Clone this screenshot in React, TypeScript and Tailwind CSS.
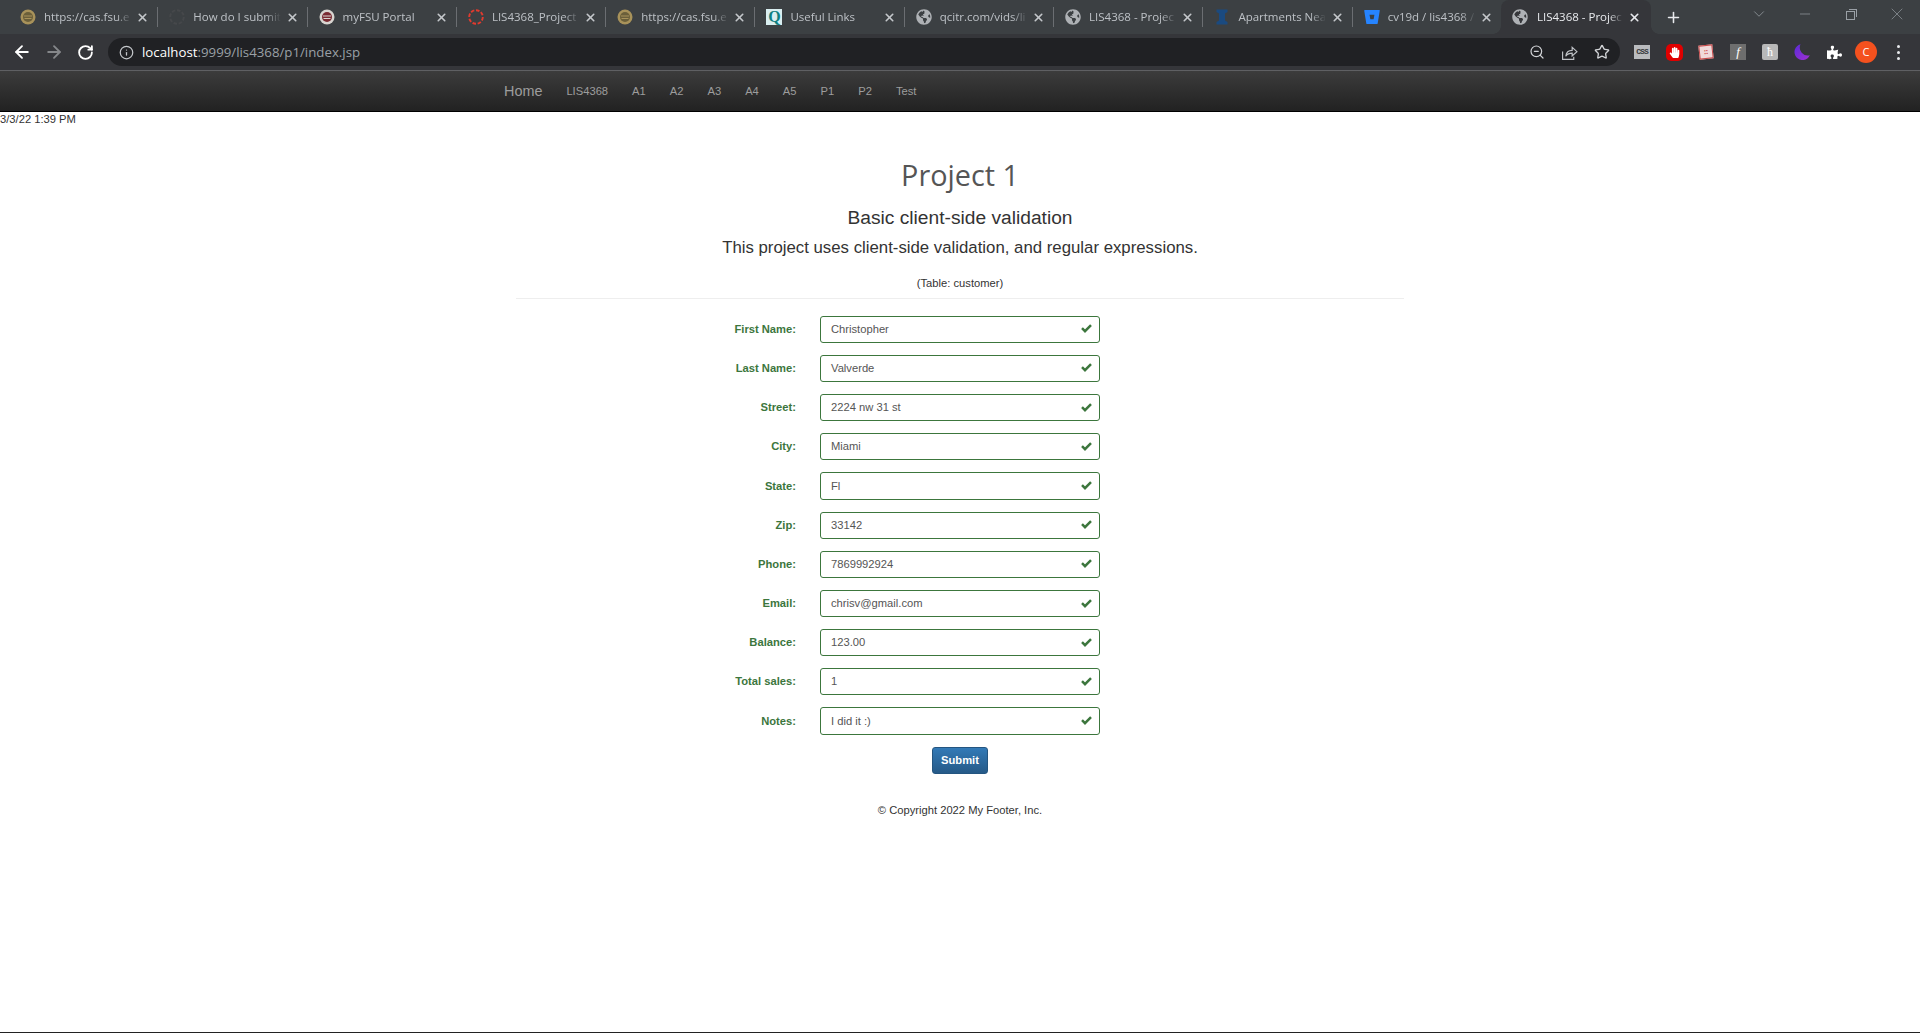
import React from "react";
import { ArrowLeft, ArrowRight, RotateCw, Info, ZoomOut, Star, X, Plus, ChevronDown, Minus } from "lucide-react";
import { FaGlobeAmericas, FaBitbucket, FaPuzzlePiece, FaHandPaper } from "react-icons/fa";

const Seal = ({ outer, inner }: { outer: string; inner: string }) => (
  <svg viewBox="0 0 16 16" className="h-4 w-4">
    <circle cx="8" cy="8" r="7.5" fill={outer} />
    <circle cx="8" cy="8" r="5" fill={inner} />
    <path d="M4 7h8M4.5 9.5h7" stroke={outer} strokeWidth="1" />
  </svg>
);
const Dashed = ({ color }: { color: string }) => (
  <svg viewBox="0 0 16 16" className="h-4 w-4">
    <circle cx="8" cy="8" r="6.8" fill="none" stroke={color} strokeWidth="1.9" strokeDasharray="3.6 1.7" />
  </svg>
);
const Globe = () => <FaGlobeAmericas className="h-4 w-4 text-[#aeb1b5]" />;
const Spool = () => (
  <svg viewBox="0 0 16 16" className="h-4 w-4">
    <path d="M2.5 0.5h11v2.5l-2.5 1.5v7l2.5 1.5v2.5h-11V13l2.5-1.5v-7L2.5 3z" fill="#1a4a80" />
  </svg>
);
const QIcon = () => (
  <div className="flex h-4 w-4 items-center justify-center bg-[#d9eef0] font-['Liberation_Serif',serif] text-[16px] leading-4 font-bold text-[#0f7f80]">
    Q
  </div>
);
const ShareOut = () => (
  <svg viewBox="0 0 16 16" className="h-[17px] w-[17px]" fill="none" stroke="#bfc2c6" strokeWidth="1.1">
    <path d="M1.5 7v7.5h10.5V12" />
    <path d="M4.5 11.5C5 7.5 7.5 6 10.5 6V3.2L15 7.2l-4.5 4V8.6c-2.5 0-4.5.8-6 2.9z" />
  </svg>
);
const Check = () => (
  <svg viewBox="0 0 11 9" className="-mt-[1px] h-[9px] w-[11px]" fill="none" stroke="#3c763d" strokeWidth="2.5">
    <path d="M1 4.2l3 3L10 1.2" />
  </svg>
);

const tabs: { title: string; icon: React.ReactNode }[] = [
  { title: "https://cas.fsu.e", icon: <Seal outer="#a8925a" inner="#6b5f3a" /> },
  { title: "How do I submit", icon: <Dashed color="#46484b" /> },
  { title: "myFSU Portal", icon: <Seal outer="#d8d4d0" inner="#7a2a32" /> },
  { title: "LIS4368_Project", icon: <Dashed color="#e23a2e" /> },
  { title: "https://cas.fsu.e", icon: <Seal outer="#a8925a" inner="#6b5f3a" /> },
  { title: "Useful Links", icon: <QIcon /> },
  { title: "qcitr.com/vids/li", icon: <Globe /> },
  { title: "LIS4368 - Projec", icon: <Globe /> },
  { title: "Apartments Nea", icon: <Spool /> },
  { title: "cv19d / lis4368 /", icon: <FaBitbucket className="h-4 w-4 text-[#2684ff]" /> },
];

const fields: [string, string][] = [
  ["First Name:", "Christopher"],
  ["Last Name:", "Valverde"],
  ["Street:", "2224 nw 31 st"],
  ["City:", "Miami"],
  ["State:", "Fl"],
  ["Zip:", "33142"],
  ["Phone:", "7869992924"],
  ["Email:", "chrisv@gmail.com"],
  ["Balance:", "123.00"],
  ["Total sales:", "1"],
  ["Notes:", "I did it :)"],
];

const navItems = ["LIS4368", "A1", "A2", "A3", "A4", "A5", "P1", "P2", "Test"];

function Tab({ title, icon }: { title: string; icon: React.ReactNode }) {
  return (
    <div className="flex h-[34px] w-[149.3px] shrink-0 items-center justify-between">
      <div className="flex h-[20px] w-full items-center border-r border-[#6b6e72] pr-[8px] pl-[11px]">
        <div className="flex h-4 w-4 shrink-0 items-center justify-center">{icon}</div>
        <div className="ml-[8px] w-[89px] overflow-hidden text-[11.5px] whitespace-nowrap text-[#bdc1c6] [mask-image:linear-gradient(to_right,black_72px,transparent_88px)]">
          {title}
        </div>
        <X className="ml-auto h-[13px] w-[13px] shrink-0 text-[#c4c7cb]" strokeWidth={3} />
      </div>
    </div>
  );
}

function ExtCell({ children }: { children: React.ReactNode }) {
  return <div className="flex h-[24px] w-[32px] shrink-0 items-center justify-center">{children}</div>;
}

function ChromeBar() {
  return (
    <div className="font-['Open_Sans',sans-serif]">
      <div className="flex h-[34px] items-center bg-[#3c4043] pl-[9px]">
        {tabs.map((t, i) => (
          <Tab key={i} title={t.title} icon={t.icon} />
        ))}
        <div className="relative -ml-[1px] flex h-[34px] w-[150px] shrink-0 items-center rounded-t-lg bg-[#35363a] pr-[10px] pl-[11px]">
          <span className="absolute bottom-0 -left-2 h-2 w-2 bg-[radial-gradient(circle_at_0_0,transparent_7.5px,#35363a_8px)]" />
          <span className="absolute bottom-0 -right-2 h-2 w-2 bg-[radial-gradient(circle_at_100%_0,transparent_7.5px,#35363a_8px)]" />
          <Globe />
          <div className="ml-[9px] w-[88px] overflow-hidden text-[11.5px] whitespace-nowrap text-[#e8eaed] [mask-image:linear-gradient(to_right,black_72px,transparent_86px)]">
            LIS4368 - Projec
          </div>
          <X className="ml-auto h-[13px] w-[13px] text-[#e8eaed]" strokeWidth={3} />
        </div>
        <Plus className="ml-[14px] h-[17px] w-[17px] text-[#e8eaed]" strokeWidth={2.2} />
        <div className="ml-auto flex h-[34px] items-start text-[#9aa0a6]">
          <div className="flex h-[28px] w-[46px] items-center justify-center">
            <ChevronDown className="h-[18px] w-[18px]" strokeWidth={1} />
          </div>
          <div className="flex h-[28px] w-[46px] items-center justify-center">
            <Minus className="h-[16px] w-[16px]" strokeWidth={1} />
          </div>
          <div className="flex h-[28px] w-[46px] -translate-x-[1px] items-center justify-center">
            <div className="relative h-[9px] w-[9px] translate-y-[1px] border border-[#9aa0a6]">
              <span className="absolute -top-[3px] -right-[3px] h-[8px] w-[8px] border-t border-r border-[#9aa0a6]" />
            </div>
          </div>
          <div className="flex h-[28px] w-[46px] items-center justify-center">
            <X className="h-[20px] w-[20px]" strokeWidth={0.8} />
          </div>
        </div>
      </div>

      <div className="flex h-[36px] items-center bg-[#35363a]">
        <div className="flex w-[108px] shrink-0 items-center pl-[12px] text-white">
          <ArrowLeft className="h-[20px] w-[20px]" strokeWidth={2.2} />
          <ArrowRight className="ml-[12px] h-[20px] w-[20px] text-[#85878a]" strokeWidth={2.2} />
          <RotateCw className="ml-[13px] h-[17px] w-[17px]" strokeWidth={2.6} />
        </div>
        <div className="flex h-[28px] w-[1512px] shrink-0 items-center rounded-full bg-[#202124] pr-[10px] pl-[11px]">
          <Info className="h-[15px] w-[15px] text-[#c4c7cb]" strokeWidth={2} />
          <div className="mt-[1px] ml-[8px] text-[13.25px] leading-none whitespace-nowrap text-[#9aa0a6]">
            <span className="text-white">localhost</span>:9999/lis4368/p1/index.jsp
          </div>
          <div className="ml-auto flex items-center gap-[16px] text-[#d2d4d7]">
            <ZoomOut className="h-[16px] w-[16px]" strokeWidth={1.8} />
            <ShareOut />
            <Star className="h-[16px] w-[16px]" strokeWidth={2} />
          </div>
        </div>
        <div className="flex items-center pl-[6px]">
          <ExtCell>
            <div className="flex h-[14px] w-[16px] items-center justify-center bg-[#b9bbbe] font-['Liberation_Mono',monospace] text-[8px] font-bold tracking-[-1px] text-[#35363a]">
              CSS
            </div>
          </ExtCell>
          <ExtCell>
            <div className="flex h-[17px] w-[17px] items-center justify-center rounded-[5px] bg-[#e00000]">
              <FaHandPaper className="h-[11px] w-[11px] text-white" />
            </div>
          </ExtCell>
          <ExtCell>
            <div className="flex h-[14px] w-[14px] -rotate-6 items-center justify-center border border-[#c94a4a] bg-[#f0dada] text-[7px] font-bold text-[#c93030]">
              ::
            </div>
          </ExtCell>
          <ExtCell>
            <div className="flex h-[16px] w-[16px] items-center justify-center bg-[#6e6e6e] font-['Liberation_Serif',serif] text-[13px] text-white italic">
              f
            </div>
          </ExtCell>
          <ExtCell>
            <div className="flex h-[16px] w-[16px] items-center justify-center rounded-[2px] bg-[#b8b8b8] font-['Liberation_Serif',serif] text-[12px] text-white">
              ћ
            </div>
          </ExtCell>
          <ExtCell>
            <svg viewBox="0 0 16 16" className="h-[16px] w-[16px]">
              <defs>
                <linearGradient id="moon" x1="0" y1="0" x2="1" y2="1">
                  <stop offset="0" stopColor="#5a2bd8" />
                  <stop offset="1" stopColor="#a030d0" />
                </linearGradient>
              </defs>
              <path d="M6.5 0.3A8 8 0 1 0 15.8 11.3 A8 8 0 0 1 6.5 0.3z" fill="url(#moon)" />
            </svg>
          </ExtCell>
          <ExtCell>
            <FaPuzzlePiece className="h-[15px] w-[15px] text-white" />
          </ExtCell>
          <ExtCell>
            <div className="flex h-[22px] w-[22px] items-center justify-center rounded-full bg-[#f4511e] text-[11px] text-white">
              C
            </div>
          </ExtCell>
          <ExtCell>
            <div className="flex flex-col gap-[3px]">
              <span className="h-[3px] w-[3px] rounded-full bg-[#e8eaed]" />
              <span className="h-[3px] w-[3px] rounded-full bg-[#e8eaed]" />
              <span className="h-[3px] w-[3px] rounded-full bg-[#e8eaed]" />
            </div>
          </ExtCell>
        </div>
      </div>
      <div className="h-px bg-[#5f6063]" />
    </div>
  );
}

function Navbar() {
  return (
    <nav className="h-[41px] border-b border-black bg-gradient-to-b from-[#3c3c3c] to-[#222222]">
      <div className="mx-auto flex h-[40px] w-[936px] items-center px-[12px] text-[#9d9d9d]">
        <a className="mt-[2px] mr-[24px] text-[14.4px]">Home</a>
        <div className="flex items-center gap-[24px] text-[11.2px]">
          {navItems.map((n) => (
            <a key={n}>{n}</a>
          ))}
        </div>
      </div>
    </nav>
  );
}

function Row({ label, value }: { label: string; value: string }) {
  return (
    <div className="mb-[12px] flex h-[27.2px] items-center">
      <label className="w-[304px] text-right text-[11.2px] font-bold text-[#3c763d]">{label}</label>
      <div className="ml-[24px] flex h-[27.2px] w-[280px] items-center justify-between rounded-[3px] border border-[#3c763d] bg-white pr-[7px] pl-[10px] text-[11.2px] text-[#555555]">
        <span>{value}</span>
        <Check />
      </div>
    </div>
  );
}

export default function App() {
  return (
    <div className="flex h-screen flex-col overflow-hidden border-b border-[#222222] bg-white font-['Liberation_Sans',Arial,sans-serif] text-[#333333]">
      <ChromeBar />
      <Navbar />
      <div className="flex-1">
        <div className="h-[14px] text-[11.2px] leading-[14px] text-[#333333]">3/3/22 1:39 PM</div>
        <div className="mx-auto w-[888px] text-center">
          <h2 className="mt-[33px] font-['Open_Sans',sans-serif] text-[28.8px] leading-[32px] text-[#555555]">Project 1</h2>
          <h4 className="mt-[15px] text-[19.2px] leading-[24px] text-[#333333]">Basic client-side validation</h4>
          <p className="mt-[7px] text-[16.8px] leading-[22px]">This project uses client-side validation, and regular expressions.</p>
          <p className="mt-[17px] text-[11.2px] leading-[14px]">(Table: customer)</p>
          <hr className="mt-[8px] border-[#eeeeee]" />
        </div>
        <form className="mx-auto mt-[16.6px] w-[936px]">
          {fields.map(([l, v]) => (
            <Row key={l} label={l} value={v} />
          ))}
          <div className="flex justify-center pt-[0.4px]">
            <button
              type="button"
              className="h-[27px] w-[56px] rounded-[3px] border border-[#245580] bg-gradient-to-b from-[#337ab7] to-[#265a88] text-[11.2px] font-bold text-white"
            >
              Submit
            </button>
          </div>
        </form>
        <p className="mt-[29px] text-center text-[11.2px] leading-[14px]">© Copyright 2022 My Footer, Inc.</p>
      </div>
    </div>
  );
}
